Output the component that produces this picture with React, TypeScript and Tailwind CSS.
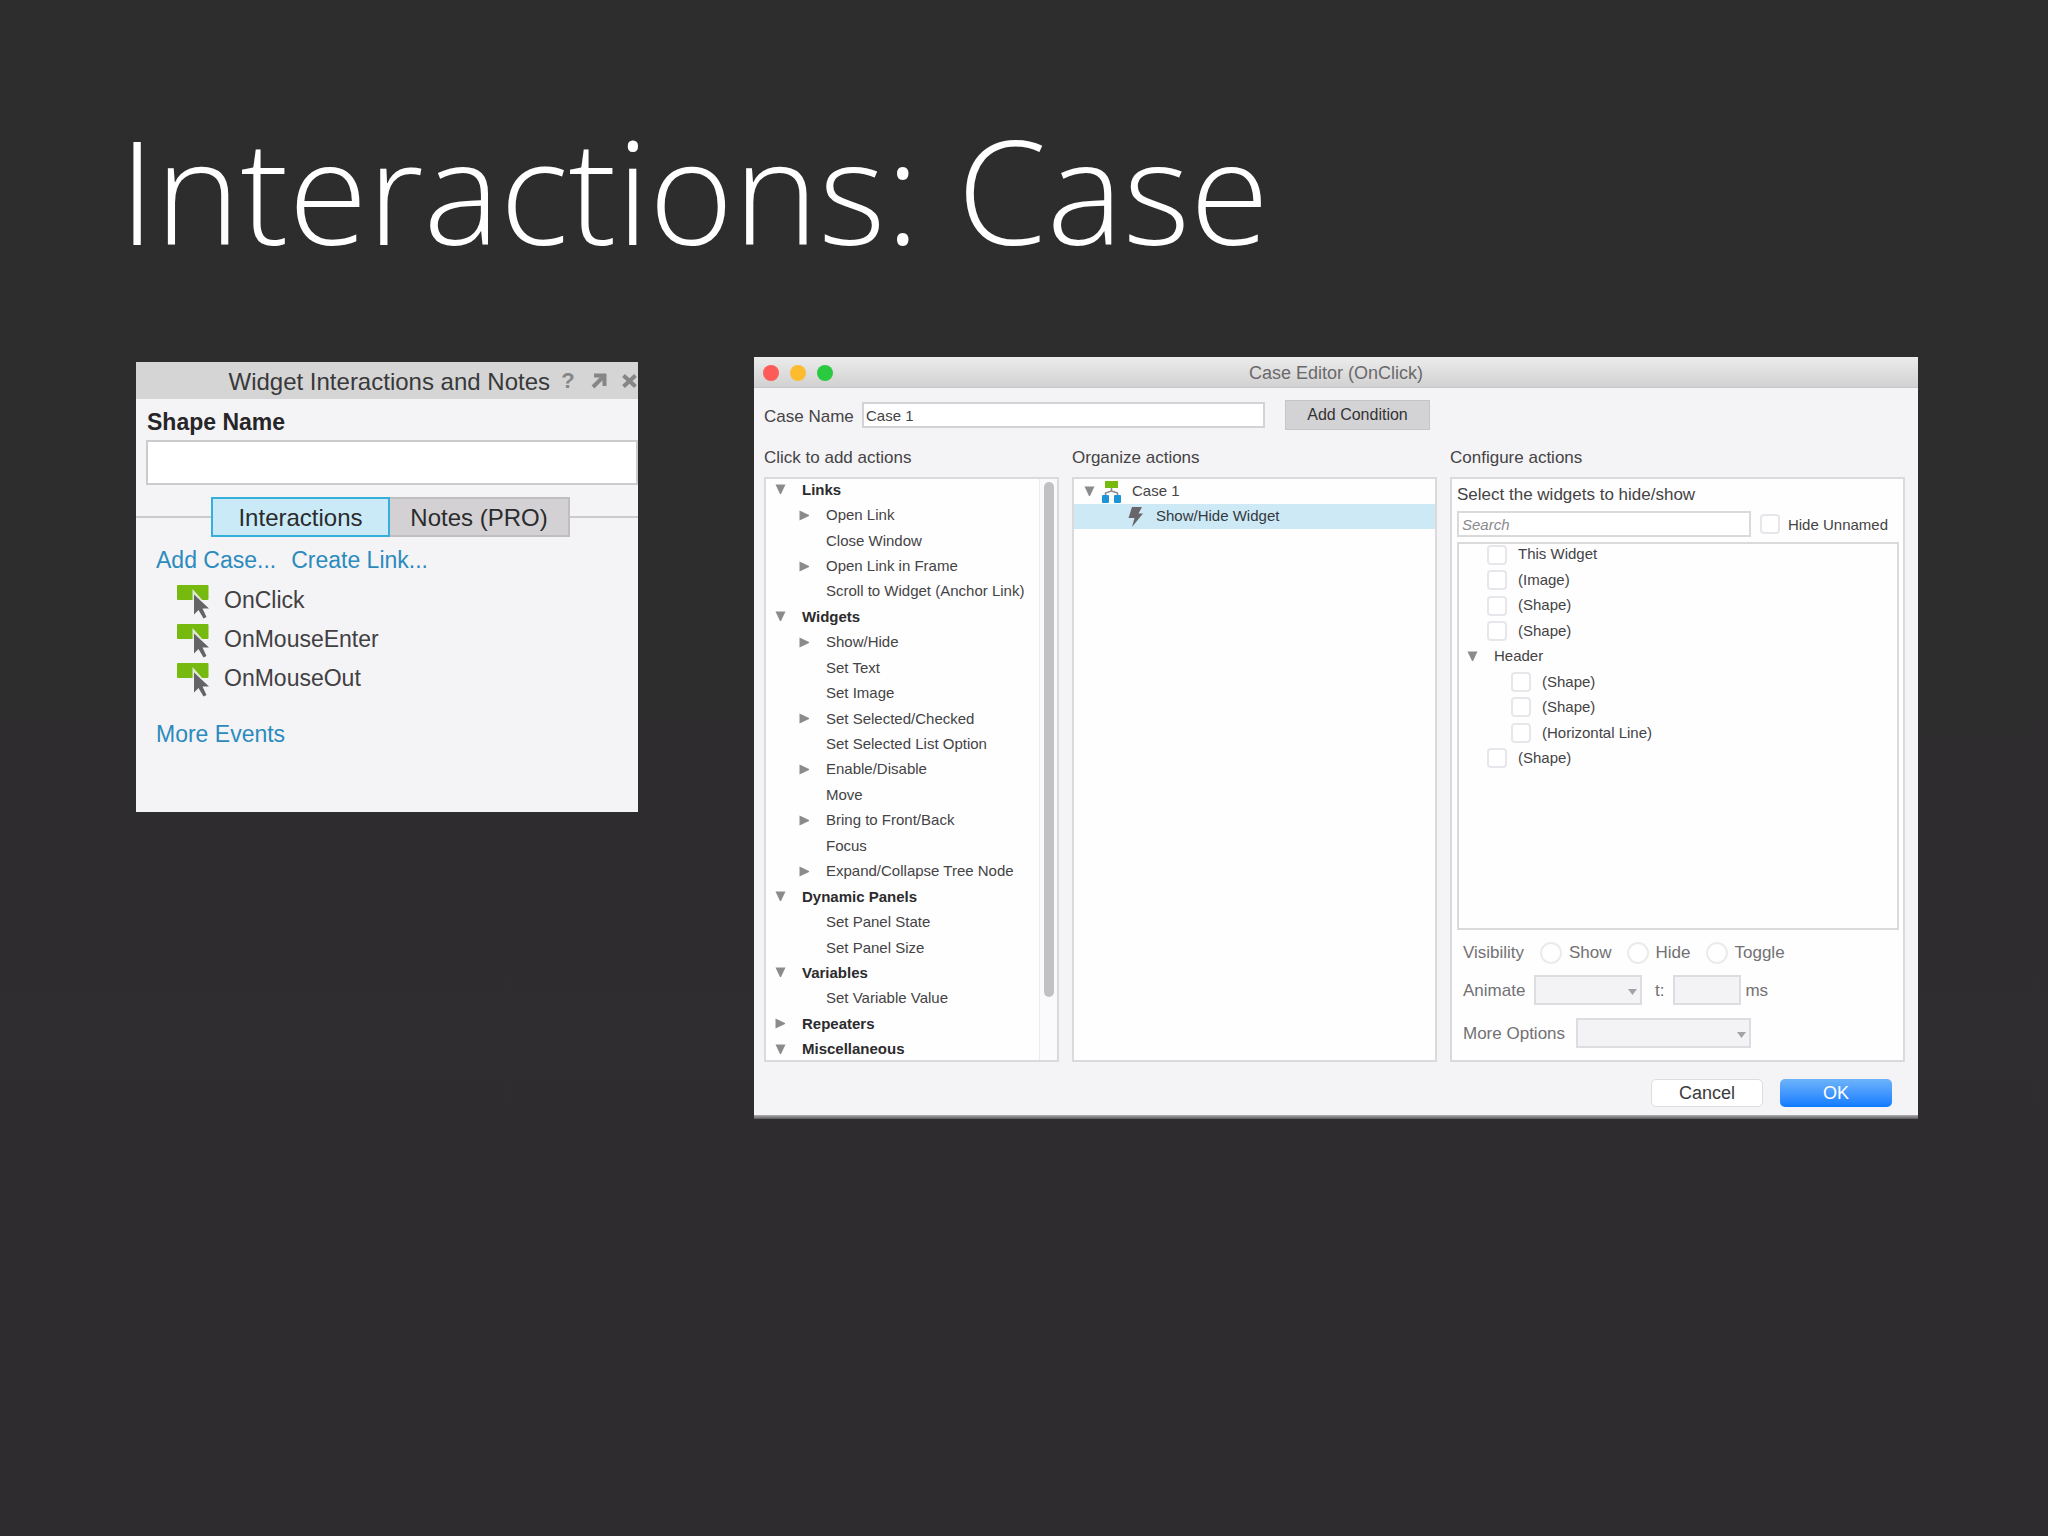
import React from 'react';

interface ActionItem {
  label: string;
  group?: boolean;
  arrow?: 'down' | 'right';
}

const ACTIONS: ActionItem[] = [
  { label: 'Links', group: true, arrow: 'down' },
  { label: 'Open Link', arrow: 'right' },
  { label: 'Close Window' },
  { label: 'Open Link in Frame', arrow: 'right' },
  { label: 'Scroll to Widget (Anchor Link)' },
  { label: 'Widgets', group: true, arrow: 'down' },
  { label: 'Show/Hide', arrow: 'right' },
  { label: 'Set Text' },
  { label: 'Set Image' },
  { label: 'Set Selected/Checked', arrow: 'right' },
  { label: 'Set Selected List Option' },
  { label: 'Enable/Disable', arrow: 'right' },
  { label: 'Move' },
  { label: 'Bring to Front/Back', arrow: 'right' },
  { label: 'Focus' },
  { label: 'Expand/Collapse Tree Node', arrow: 'right' },
  { label: 'Dynamic Panels', group: true, arrow: 'down' },
  { label: 'Set Panel State' },
  { label: 'Set Panel Size' },
  { label: 'Variables', group: true, arrow: 'down' },
  { label: 'Set Variable Value' },
  { label: 'Repeaters', group: true, arrow: 'right' },
  { label: 'Miscellaneous', group: true, arrow: 'down' },
];

const WIDGETS = [
  { label: 'This Widget', level: 1 },
  { label: '(Image)', level: 1 },
  { label: '(Shape)', level: 1 },
  { label: '(Shape)', level: 1 },
  { label: 'Header', level: 0 },
  { label: '(Shape)', level: 2 },
  { label: '(Shape)', level: 2 },
  { label: '(Horizontal Line)', level: 2 },
  { label: '(Shape)', level: 1 },
];

const EVENTS = ['OnClick', 'OnMouseEnter', 'OnMouseOut'];

const Arrow: React.FC<{ dir?: 'down' | 'right' }> = ({ dir }) => (
  <svg className="w-[11px] h-[11px] shrink-0" viewBox="0 0 11 11" fill="#8b8b8d">
    {dir === 'down' && <path d="M0.5 0.5h10L6 10H5z" />}
    {dir === 'right' && <path d="M0.5 0.5v10L10 6V5z" />}
  </svg>
);

const EventIcon = () => (
  <svg className="w-[33px] h-[34px] shrink-0" viewBox="0 0 33 34">
    <rect x="0" y="0" width="31.5" height="15" rx="1" fill="#76b90f" />
    <path d="M15.5 4v26.500l5.500-5.500L26 33.500l4-2-4-8.500h6.500z" fill="#f4f3f6" opacity="0.85" />
    <path d="M17 9.500v20l4.500-4.500 5 8.500 3-1.500-4-8.500h6.500z" fill="#646366" />
  </svg>
);

const CaseIcon = () => (
  <svg className="w-[19px] h-[22px] shrink-0" viewBox="0 0 19 22">
    <rect x="3" y="0" width="13" height="7" fill="#76b90f" />
    <path d="M9.500 7v3L3.500 12v3M9.500 10l6 2v3" fill="none" stroke="#8a8a8c" strokeWidth="1.500" />
    <rect x="0" y="14" width="7" height="8" rx="1" fill="#1b95d6" />
    <rect x="12" y="14" width="7" height="8" rx="1" fill="#1b95d6" />
  </svg>
);

const BoltIcon = () => (
  <svg className="w-4 h-5 shrink-0" viewBox="0 0 16 20" fill="#68666a">
    <path d="M4 0h10L10.500 6.500h4.500L4 20 6.500 11H0.500z" />
  </svg>
);

const CheckBox: React.FC<{ id: string }> = ({ id }) => (
  <input
    id={id}
    type="checkbox"
    className="appearance-none w-5 h-5 shrink-0 rounded-[4px] border-2 border-[#e8e6ea] bg-white"
  />
);

const Picker: React.FC<{ id: string; className: string }> = ({ id, className }) => (
  <div className={`relative h-[30px] ${className}`}>
    <select
      id={id}
      disabled
      className="appearance-none block w-full h-full bg-[#f3f2f5] border-2 border-[#dddce0]"
    >
      <option></option>
    </select>
    <svg className="absolute right-[5px] top-[14px] w-[9px] h-[6px]" viewBox="0 0 9 6" fill="#a3a2a6">
      <path d="M0 0h9L4.500 6z" />
    </svg>
  </div>
);

const WidgetPanel = () => (
  <section className="mt-[5px] h-[450px] bg-[#f4f3f6] text-[23px] leading-[28px] text-[#414042] overflow-hidden">
    {/* Title bar */}
    <header className="h-[37px] bg-[#d5d5d5] flex items-center justify-end">
      <h2 className="pt-[2px] text-2xl leading-[28px] text-[#39393b] mr-[11px] whitespace-nowrap">Widget Interactions and Notes</h2>
      <button aria-label="Help" className="w-[14px] text-[22px] font-bold text-[#868687] mr-[16px]">?</button>
      <button aria-label="Undock" className="mr-[15px]">
        <svg className="w-4 h-4" viewBox="0 0 16 16" fill="none" stroke="#868687" strokeWidth="4">
          <path d="M3 2.500h12M13.500 1v12M13 3L2 14" />
        </svg>
      </button>
      <button aria-label="Close" className="mr-px">
        <svg className="w-[15px] h-4" viewBox="0 0 15 16" fill="none" stroke="#868687" strokeWidth="4">
          <path d="M1.500 2.500l12 11M13.500 2.500l-12 11" />
        </svg>
      </button>
    </header>

    <label htmlFor="shape-name" className="block mt-[9px] ml-[11px] font-bold text-[#262527]">Shape Name</label>
    <input
      id="shape-name"
      type="text"
      className="block mt-[4px] ml-[10px] w-[calc(100%-10px)] h-[45px] bg-white border-2 border-[#cbcacd] px-2"
    />

    {/* Tabs */}
    <div className="mt-[12px] flex items-center text-2xl text-[#2b2b2d]">
      <div className="w-[75px] h-[2px] bg-[#cbcacd]" />
      <button className="w-[179px] h-10 pt-[2px] bg-[#c9eaf6] border-2 border-[#36b0db]">Interactions</button>
      <button className="w-[180px] h-10 pt-[2px] bg-[#d3d1d4] border-2 border-l-0 border-[#bfbec1]">Notes (PRO)</button>
      <div className="flex-1 h-[2px] bg-[#cbcacd]" />
    </div>

    <div className="mt-[9px] ml-5 flex gap-[15px] text-[#2b8bbd]">
      <a href="#add-case">Add Case...</a>
      <a href="#create-link">Create Link...</a>
    </div>

    <ul className="mt-[11px] ml-[41px]">
      {EVENTS.map(name => (
        <li key={name} className="h-[39px] flex items-start gap-[14px]">
          <EventIcon />
          <span className="pt-px">{name}</span>
        </li>
      ))}
    </ul>

    <a href="#more-events" className="block mt-[18px] ml-5 text-[#2b8bbd]">More Events</a>
  </section>
);

const ActionList = () => (
  <div className="flex h-[585px] bg-[#fefefe] outline-2 -outline-offset-2 outline-[#dad9dc]">
    <ul className="flex-1 grid auto-rows-fr">
      {ACTIONS.map(item => (
        <li key={item.label} className={`flex items-center gap-4 min-h-0 ${item.group ? 'pl-[11px]' : 'pl-[35px]'}`}>
          <Arrow dir={item.arrow} />
          <button className={`leading-[20px] whitespace-nowrap ${item.group ? 'font-bold text-[#2c2b2d]' : ''}`}>
            {item.label}
          </button>
        </li>
      ))}
    </ul>
    <div className="w-5 border-l border-[#ebeaed] bg-[#faf9fb] pl-[4px] pt-[5px]">
      <div className="w-[10px] h-[515px] rounded-full bg-[#c1c0c2]" />
    </div>
  </div>
);

const OrganizeList = () => (
  <div className="h-[585px] bg-[#fefefe] outline-2 -outline-offset-2 outline-[#dad9dc] px-[2px]">
    <div className="pt-[2px] h-[27px] pl-[10px] flex items-center">
      <Arrow dir="down" />
      <span className="ml-[7px] mr-[11px]"><CaseIcon /></span>
      Case 1
    </div>
    <div className="h-[25px] pl-[54px] flex items-center gap-3 bg-[#cde9f5] text-[#333a3f]">
      <BoltIcon />
      Show/Hide Widget
    </div>
  </div>
);

const ConfigurePanel = () => (
  <div className="h-[585px] bg-[#fefefe] outline-2 -outline-offset-2 outline-[#dad9dc] pl-[7px] pr-[6px] pt-[6px]">
    <p className="text-[17px] leading-[24px]">Select the widgets to hide/show</p>
    <div className="mt-[4px] flex items-center">
      <input
        type="text"
        aria-label="Search"
        placeholder="Search"
        className="flex-1 min-w-0 h-[26px] bg-white border-2 border-[#dad9dc] px-[3px] italic placeholder:text-[#8b8a8d]"
      />
      <div className="ml-[9px] mr-[11px] flex items-center gap-2">
        <CheckBox id="hide-unnamed" />
        <label htmlFor="hide-unnamed" className="pt-[2px] whitespace-nowrap">Hide Unnamed</label>
      </div>
    </div>

    <div className="mt-[5px] h-[388px] border-2 border-[#dad9dc]">
      <ul className="h-[229px] grid auto-rows-fr -ml-[2px] -mt-[2px]">
        {WIDGETS.map((w, i) =>
          w.level === 0 ? (
            <li key={i} className="flex items-center gap-4 pl-[10px]">
              <Arrow dir="down" />
              {w.label}
            </li>
          ) : (
            <li key={i} className={`flex items-center gap-[11px] ${w.level === 1 ? 'pl-[30px]' : 'pl-[54px]'}`}>
              <CheckBox id={`widget-${i}`} />
              <label htmlFor={`widget-${i}`}>{w.label}</label>
            </li>
          )
        )}
      </ul>
    </div>

    <div className="pl-[6px] text-[17px] text-[#727174]">
      <div className="mt-[11px] h-6 flex items-center">
        <span className="w-[77px]">Visibility</span>
        {['Show', 'Hide', 'Toggle'].map(name => (
          <div key={name} className="flex items-center gap-[7px] mr-[15px]">
            <input
              id={`vis-${name}`}
              type="radio"
              name="visibility"
              disabled
              className="appearance-none w-[22px] h-[22px] rounded-full border-2 border-[#eceaed] bg-white"
            />
            <label htmlFor={`vis-${name}`}>{name}</label>
          </div>
        ))}
      </div>
      <div className="mt-[10px] flex items-center">
        <label htmlFor="animate" className="pt-[2px] w-[71px]">Animate</label>
        <Picker id="animate" className="w-[108px]" />
        <label htmlFor="time" className="pt-[2px] ml-[13px] mr-[9px]">t:</label>
        <input id="time" type="text" disabled className="w-[68px] h-[30px] bg-[#f3f2f5] border-2 border-[#dddce0] mr-[4px]" />
        <span className="pt-[2px]">ms</span>
      </div>
      <div className="mt-[13px] flex items-center">
        <label htmlFor="more-options" className="pt-[2px] w-[113px]">More Options</label>
        <Picker id="more-options" className="w-[175px]" />
      </div>
    </div>
  </div>
);

const CaseEditor = () => (
  <section className="text-[15px] text-[#444345]">
    {/* Window title bar */}
    <header className="h-[31px] bg-linear-to-b from-[#ececec] to-[#d2d1d2] border-b border-[#c8c7c9] grid grid-cols-[1fr_auto_1fr] items-center pt-px px-[9px]">
      <div className="flex gap-[11px]">
        <button aria-label="Close window" className="w-4 h-4 rounded-full bg-[#fc5b57]" />
        <button aria-label="Minimize window" className="w-4 h-4 rounded-full bg-[#fdbc2f]" />
        <button aria-label="Zoom window" className="w-4 h-4 rounded-full bg-[#29c940]" />
      </div>
      <h2 className="text-lg text-[#6a696b]">Case Editor (OnClick)</h2>
    </header>

    <div className="bg-[#f4f3f6] pl-[10px] pr-[13px] pt-3 pb-2">
      <div className="flex items-center">
        <label htmlFor="case-name" className="pt-[3px] text-[17px] w-[98px]">Case Name</label>
        <input
          id="case-name"
          type="text"
          defaultValue="Case 1"
          className="w-[403px] h-[26px] bg-white border-2 border-[#d3d2d5] px-[2px]"
        />
        <button className="ml-5 w-[145px] h-[30px] bg-[#d3d2d4] border border-[#c6c5c7] text-base text-[#333234]">
          Add Condition
        </button>
      </div>

      <div className="mt-[16px] grid grid-cols-[295fr_365fr_455fr] gap-x-[13px]">
        <div>
          <h3 className="text-[17px] leading-[24px] mb-[7px]">Click to add actions</h3>
          <ActionList />
        </div>
        <div>
          <h3 className="text-[17px] leading-[24px] mb-[7px]">Organize actions</h3>
          <OrganizeList />
        </div>
        <div>
          <h3 className="text-[17px] leading-[24px] mb-[7px]">Configure actions</h3>
          <ConfigurePanel />
        </div>
      </div>

      <div className="mt-[17px] mr-[13px] flex justify-end gap-[17px] text-lg leading-none">
        <button className="w-[112px] h-7 rounded-[5px] bg-white border border-[#dddcdf] text-[#3b3a3c]">Cancel</button>
        <button className="w-[112px] h-7 rounded-[5px] bg-linear-to-b from-[#6cb3fa] to-[#0a7bff] text-white">OK</button>
      </div>
    </div>
    <div className="h-1 bg-linear-to-b from-[#b0afb1] to-[#5b595c]" />
  </section>
);

const App = () => (
  <main className="min-h-screen bg-linear-to-b from-[#2d2d2d] to-[#2f2c2f] pt-[109px] pb-16 pl-[136px] pr-[130px] font-['Liberation_Sans',Arial,sans-serif]">
    <h1 className="-ml-[17px] text-[144px] leading-[160px] font-light text-white font-['Open_Sans',sans-serif]">
      Interactions: Case
    </h1>
    <div className="mt-[88px] grid grid-cols-[502fr_1164fr] gap-[116px] items-start">
      <WidgetPanel />
      <CaseEditor />
    </div>
  </main>
);

export default App;
